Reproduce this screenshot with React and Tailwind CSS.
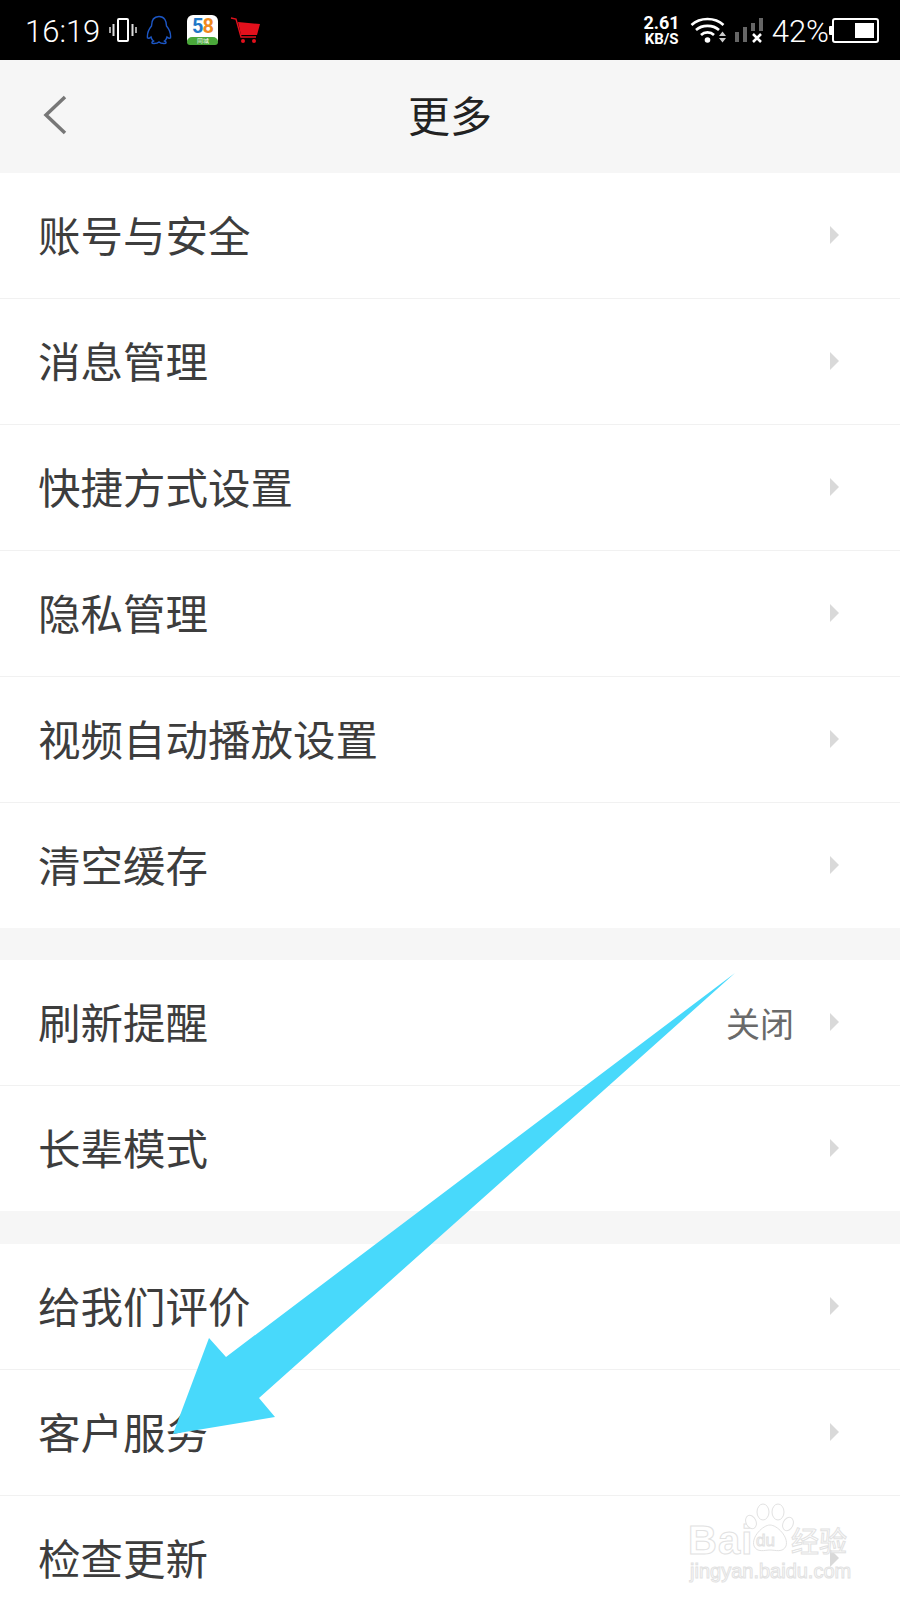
import React from 'react';

const Chevron = () => (
  <svg width="9" height="18" viewBox="0 0 9 18" className="shrink-0 mb-[1px]">
    <path d="M0 0L9 9L0 18Z" fill="#d9d9d9" />
  </svg>
);

const Row = ({ label, value, last }) => (
  <div className={`flex items-center pl-[38px] pr-[61px] bg-white ${last ? 'h-[125px]' : 'h-[126px] border-b border-[#f1f1f1]'}`}>
    <span className="flex-1 text-[42.5px] leading-none text-[#3d3d3d] mb-[2px]">{label}</span>
    {value && <span className="text-[34px] leading-none text-[#6a6a6a] mr-[36px]">{value}</span>}
    <Chevron />
  </div>
);

const StatusBar = () => (
  <div className="h-[60px] bg-black flex items-center pt-[3px] pl-[25px] pr-[21px] text-white font-['Roboto',sans-serif]">
    <span className="text-[31px] leading-none font-light w-[84px]">16:19</span>
    {/* vibrate */}
    <svg width="28" height="26" viewBox="0 0 28 26" className="-mt-[3px]">
      <rect x="9" y="2" width="10" height="22" rx="1" fill="none" stroke="#fff" strokeWidth="2" />
      <path d="M4.5 7v12M23.5 7v12" stroke="#ddd" strokeWidth="2" />
      <path d="M1 10v6M27 10v6" stroke="#ddd" strokeWidth="1.5" />
    </svg>
    {/* qq */}
    <svg width="26" height="30" viewBox="0 0 26 30" className="ml-[9px] -mt-[3px]">
      <path d="M13 1.5C7.5 1.5 5.5 6 5.5 11C3 14 1 19 1.5 23C3 24 4.5 22.5 5 22C5.5 24 6 25 7.5 26C5.5 27 5 28.5 8 28.5C10.5 28.5 12 28 13 27C14 28 15.5 28.5 18 28.5C21 28.5 20.5 27 18.500 26C20 25 20.500 24 21 22C21.500 22.500 23 24 24.500 23C25 19 23 14 20.500 11C20.500 6 18.500 1.500 13 1.500Z" fill="none" stroke="#1c56c4" strokeWidth="1.4" />
    </svg>
    {/* 58 app */}
    <div className="ml-[15px] -mt-[3px] w-[31px] h-[30px] rounded-[6px] bg-white flex flex-col items-center">
      <div className="h-[22px] flex items-center text-[20px] font-bold leading-none tracking-[-1px]">
        <span className="text-[#1f78c8]">5</span>
        <span className="text-[#ef8a1e]">8</span>
      </div>
      <div className="flex-1 w-full bg-[#4aa83a] rounded-t-[10px] rounded-b-[6px] flex items-center justify-center text-[6px] leading-none text-white">同城</div>
    </div>
    {/* cart */}
    <svg width="31" height="28" viewBox="0 0 31 28" className="ml-[12px] -mt-[3px]">
      <path d="M1 2L6 3L11 21H26" fill="none" stroke="#e3101c" strokeWidth="1.4" />
      <path d="M8 6L30 8L27 19H11Z" fill="#e3101c" />
      <circle cx="13" cy="25" r="2" fill="#e3101c" />
      <circle cx="24" cy="25" r="2" fill="#e3101c" />
    </svg>
    <div className="flex-1" />
    {/* speed */}
    <div className="flex flex-col items-center font-bold -mt-[3px] mr-[10px]">
      <span className="text-[18px] leading-[18px]">2.61</span>
      <span className="text-[15px] leading-[15px]">KB/S</span>
    </div>
    {/* wifi */}
    <svg width="36" height="28" viewBox="0 0 36 28" className="mr-[9px] -mt-[3px]">
      <path d="M1.500 9C10 1 25 1 33.500 9" fill="none" stroke="#fff" strokeWidth="2.600" />
      <path d="M6 14C12 8.500 23 8.500 29 14" fill="none" stroke="#fff" strokeWidth="2.600" />
      <path d="M11 19C14.500 15.500 20.500 15.500 24 19" fill="none" stroke="#fff" strokeWidth="2.600" />
      <circle cx="17.500" cy="24" r="2.800" fill="#fff" />
      <path d="M29 20h7l-3.500-4.500zM29 22h7l-3.500 4.500z" fill="#ccc" />
    </svg>
    {/* signal */}
    <svg width="28" height="26" viewBox="0 0 28 26" className="mr-[9px] -mt-[3px]">
      <rect x="0" y="15" width="4" height="10" fill="#666" />
      <rect x="8" y="10" width="4" height="15" fill="#666" />
      <rect x="16" y="6" width="4" height="8" fill="#666" />
      <rect x="24" y="1" width="4" height="13" fill="#666" />
      <path d="M18 17l8 8M26 17l-8 8" stroke="#fff" strokeWidth="2.500" />
    </svg>
    <span className="text-[31px] leading-none font-light">42%</span>
    {/* battery */}
    <div className="flex items-center -mt-[3px]">
      <div className="w-[3px] h-[9px] bg-white rounded-l-[1px]" />
      <div className="w-[47px] h-[25px] border-2 border-white rounded-[3px] flex justify-end items-center pr-[3px]">
        <div className="w-[19px] h-[15px] bg-white" />
      </div>
    </div>
  </div>
);

const Watermark = () => (
  <div className="absolute left-[688px] top-[1500px] w-[170px] h-[90px] font-['Liberation_Sans',sans-serif] text-white">
    <span className="absolute left-[0px] top-[20px] text-[40px] leading-none font-bold tracking-[1px] [-webkit-text-stroke:1px_#e2e2e2]">Bai</span>
    <svg width="50" height="50" viewBox="0 0 50 50" className="absolute left-[57px] top-[3px]">
      <g fill="#fff" stroke="#e2e2e2" strokeWidth="1">
        <ellipse cx="6" cy="19" rx="5" ry="7" transform="rotate(-25 6 19)" />
        <ellipse cx="18" cy="9" rx="6" ry="8" />
        <ellipse cx="33" cy="9" rx="6" ry="8" />
        <ellipse cx="43" cy="21" rx="5" ry="7" transform="rotate(25 43 21)" />
        <path d="M25 22C32 22 44 34 41 43C38 50 30 47 25 47C20 47 12 50 9 43C6 34 18 22 25 22Z" />
      </g>
    </svg>
    <span className="absolute left-[68px] top-[32px] text-[17px] leading-none text-white [-webkit-text-stroke:1px_#e2e2e2]">du</span>
    <span className="absolute left-[103px] top-[26px] text-[28px] leading-none font-['Noto_Sans_CJK_SC',sans-serif] [-webkit-text-stroke:1px_#e2e2e2]">经验</span>
    <span className="absolute left-[2px] top-[61px] text-[20px] leading-none whitespace-nowrap [-webkit-text-stroke:1px_#e2e2e2]">jingyan.baidu.com</span>
  </div>
);

export default function App() {
  return (
    <div className="relative w-[900px] h-[1600px] overflow-hidden bg-white font-['Noto_Sans_CJK_SC',sans-serif]">
      <StatusBar />
      <div className="relative h-[113px] bg-[#f6f6f6] flex items-center justify-center">
        <svg width="26" height="42" viewBox="0 0 26 42" className="absolute left-[42px] top-[34px]">
          <path d="M23 3L4 21L23 39" fill="none" stroke="#777" strokeWidth="3.500" />
        </svg>
        <span className="text-[42px] leading-none text-[#222] mb-[5px]">更多</span>
      </div>

      <Row label="账号与安全" />
      <Row label="消息管理" />
      <Row label="快捷方式设置" />
      <Row label="隐私管理" />
      <Row label="视频自动播放设置" />
      <Row label="清空缓存" last />
      <div className="h-[32px] bg-[#f6f6f6]" />
      <Row label="刷新提醒" value="关闭" />
      <Row label="长辈模式" last />
      <div className="h-[33px] bg-[#f6f6f6]" />
      <Row label="给我们评价" />
      <Row label="客户服务" />
      <Row label="检查更新" last />

      <Watermark />

      {/* annotation arrow */}
      <svg width="900" height="1600" viewBox="0 0 900 1600" className="absolute left-0 top-0 pointer-events-none">
        <path d="M735 973L226 1357L209 1338L173 1434L275 1417L259 1398Z" fill="#48d9fb" />
      </svg>
    </div>
  );
}
